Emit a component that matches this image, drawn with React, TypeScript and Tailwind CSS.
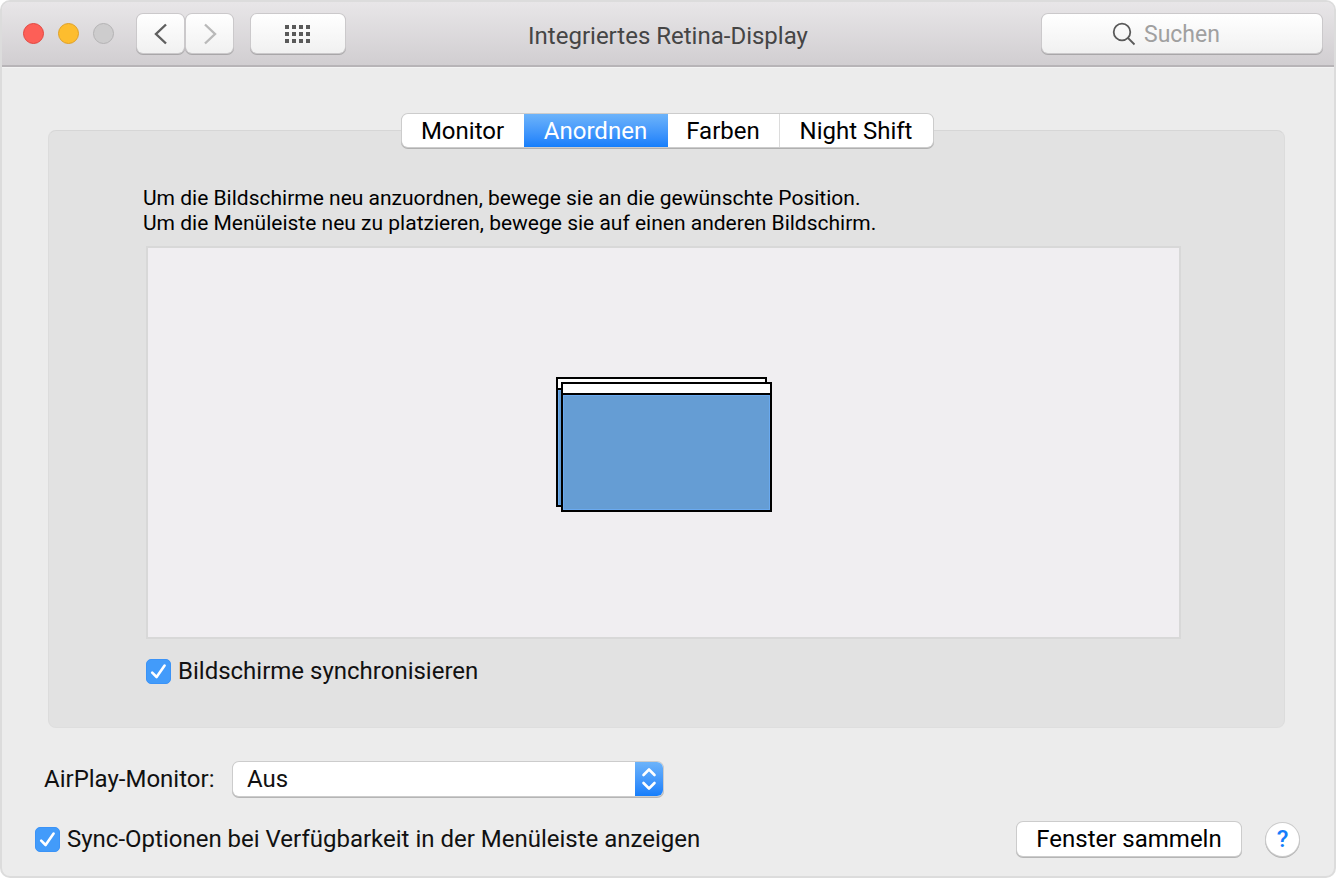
import React from "react";

const face = "font-['Roboto','Liberation_Sans',sans-serif]";

function CheckRow({ id, label }: { id: string; label: string }) {
  return (
    <div className="flex items-center gap-[7px]">
      <span className="grid size-[25px] shrink-0 place-items-center">
        <input
          id={id}
          type="checkbox"
          defaultChecked
          className="peer col-start-1 row-start-1 size-[25px] appearance-none rounded-[5px] border border-gray-300 bg-white checked:border-[#3b93f7] checked:bg-[#429bfa]"
        />
        <svg
          viewBox="0 0 25 25"
          className="pointer-events-none invisible col-start-1 row-start-1 size-[25px] peer-checked:visible"
          fill="none"
          stroke="white"
          strokeWidth="2.6"
          strokeLinecap="round"
          strokeLinejoin="round"
        >
          <path d="M6.2 13.6 L10.6 18 L18.6 6.6" />
        </svg>
      </span>
      <label htmlFor={id} className="text-2xl leading-7">
        {label}
      </label>
    </div>
  );
}

function Screen({ className }: { className: string }) {
  return (
    <div className={`absolute flex h-[130px] w-[211px] flex-col border-2 border-black bg-[#659dd4] ${className}`}>
      <div className="h-[11px] border-b-2 border-black bg-white" />
      <div className="flex-1 border border-[#6aaaf0]" />
    </div>
  );
}

const toolButton =
  "flex h-[39px] items-center justify-center rounded-md bg-linear-to-b from-white to-[#f1f1f1] shadow-[0_0_0_1px_#cbc9cb,0_1px_0_1px_#a9a7a9]";

const tabs = [
  { name: "Monitor", style: "w-[122px] rounded-l-md bg-white" },
  { name: "Anordnen", style: "w-36 bg-linear-to-b from-[#6cb3fa] to-[#147efb] text-white" },
  { name: "Farben", style: "w-28 border-r border-[#dcdcdc] bg-white" },
  { name: "Night Shift", style: "w-[153px] rounded-r-md bg-white" },
];

export default function App() {
  return (
    <main className={`flex min-h-screen flex-col overflow-hidden rounded-[10px] border-2 border-[#dcdcdc] bg-[#ececec] text-[#111] ${face}`}>
      <header className="grid h-[65px] grid-cols-[1fr_auto_1fr] items-center border-b-2 border-[#b7b4b7] bg-linear-to-b from-[#e8e6e8] to-[#d1ced1] pr-3 pl-[21px]">
        <div className="flex items-center">
          <div className="flex gap-[14px]">
            <button aria-label="Schließen" className="size-[21px] rounded-full border border-[#e2463f] bg-[#fd5f57]" />
            <button aria-label="Minimieren" className="size-[21px] rounded-full border border-[#e0a025] bg-[#fdbd2e]" />
            <button aria-label="Zoomen" disabled className="size-[21px] rounded-full border border-[#b4b3b4] bg-[#cdcccd]" />
          </div>
          <div className="ml-[23px] flex gap-[2px]">
            <button aria-label="Zurück" className={`w-[47px] ${toolButton}`}>
              <svg viewBox="0 0 14 22" className="h-[22px] w-[14px]" fill="none" stroke="#5f5f5f" strokeWidth="2.4">
                <path d="M12 1.5 L2 11 L12 20.5" />
              </svg>
            </button>
            <button aria-label="Vorwärts" disabled className={`w-[47px] ${toolButton}`}>
              <svg viewBox="0 0 14 22" className="h-[22px] w-[14px]" fill="none" stroke="#b9b9b9" strokeWidth="2.4">
                <path d="M2 1.5 L12 11 L2 20.5" />
              </svg>
            </button>
          </div>
          <button aria-label="Alle einblenden" className={`ml-[18px] w-[94px] ${toolButton}`}>
            <svg viewBox="0 0 26 18" className="h-[18px] w-[26px]" fill="#5a5a5a">
              {[0, 7, 14].map((y) => [0, 7, 14, 21].map((x) => <rect key={`${x}-${y}`} x={x} y={y} width="4" height="4" />))}
            </svg>
          </button>
        </div>
        <h1 className="pt-1 pr-[9px] text-2xl leading-7 text-[#454545]">Integriertes Retina-Display</h1>
        <label className={`w-[280px] justify-self-end gap-2 pl-[70px] ${toolButton}`}>
          <svg viewBox="0 0 24 24" className="size-6 shrink-0" fill="none" stroke="#5a5a5a" strokeWidth="1.8">
            <circle cx="10" cy="10" r="8.3" />
            <path d="M16 16 L22.5 22.5" />
          </svg>
          <input
            type="text"
            aria-label="Suchen"
            placeholder="Suchen"
            className="min-w-0 flex-1 bg-transparent pt-[2px] text-[23px] leading-7 outline-none placeholder:text-[#a0a0a0]"
          />
        </label>
      </header>

      <div className="flex flex-1 flex-col border-t border-[#f3f3f3] pt-[46px] pr-[2px]">
        <div role="tablist" className="z-10 flex h-[33px] self-center rounded-md text-2xl leading-7 text-black shadow-[0_0_0_1px_#cccccc,0_1px_0_1px_#b0b0b0]">
          {tabs.map((tab) => (
            <button key={tab.name} role="tab" aria-selected={tab.name === "Anordnen"} className={tab.style}>
              {tab.name}
            </button>
          ))}
        </div>

        <section className="mr-[47px] ml-[46px] -mt-[17px] flex flex-1 flex-col rounded-lg border border-[#d6d6d6] border-x-[#dcdcdc] border-b-[#dedede] bg-[#e2e2e2] pt-[55px] pr-[103px] pb-[42px] pl-[97px]">
          <p className="-ml-[3px] text-[21px] leading-[25px] text-black">
            Um die Bildschirme neu anzuordnen, bewege sie an die gewünschte Position.
            <br />
            Um die Menüleiste neu zu platzieren, bewege sie auf einen anderen Bildschirm.
          </p>
          <div className="mt-[10px] flex min-h-[380px] flex-1 items-center justify-center border-2 border-[#d8d8d8] bg-[#f0eef1] pt-1">
            <div className="relative h-[136px] w-[216px]">
              <Screen className="top-0 left-0" />
              <Screen className="top-[5px] left-[5px]" />
            </div>
          </div>
          <div className="mt-[18px]">
            <CheckRow id="mirror" label="Bildschirme synchronisieren" />
          </div>
        </section>

        <footer className="px-[33px] pt-[34px] pb-5">
          <div className="flex items-center pl-[9px] text-2xl leading-7">
            <label htmlFor="airplay" className="w-[189px]">
              AirPlay-Monitor:
            </label>
            <div className="relative flex h-[34px] w-[430px] overflow-hidden rounded-md shadow-[0_0_0_1px_#cccccc,0_1px_0_1px_#b5b5b5]">
              <select id="airplay" className="w-full appearance-none bg-white pl-[14px] text-2xl leading-7">
                <option>Aus</option>
              </select>
              <span className="pointer-events-none absolute inset-y-0 right-0 flex w-7 items-center justify-center bg-linear-to-b from-[#6cb3fa] to-[#147efb]">
                <svg viewBox="0 0 16 24" className="h-6 w-4" fill="none" stroke="white" strokeWidth="2.6" strokeLinecap="round" strokeLinejoin="round">
                  <path d="M2.5 8 L8 2.5 L13.5 8" />
                  <path d="M2.5 16 L8 21.5 L13.5 16" />
                </svg>
              </span>
            </div>
          </div>
          <div className="mt-[26px] flex items-center">
            <CheckRow id="menubar" label="Sync-Optionen bei Verfügbarkeit in der Menüleiste anzeigen" />
            <button className="ml-auto h-[34px] w-56 rounded-md bg-white text-2xl leading-7 text-black shadow-[0_0_0_1px_#cccccc,0_1px_0_1px_#b5b5b5]">
              Fenster sammeln
            </button>
            <button aria-label="Hilfe" className="ml-[25px] size-[33px] rounded-full bg-white text-2xl font-medium text-[#147efb] shadow-[0_0_0_1px_#cccccc,0_1px_0_1px_#b5b5b5]">
              ?
            </button>
          </div>
        </footer>
      </div>
    </main>
  );
}
